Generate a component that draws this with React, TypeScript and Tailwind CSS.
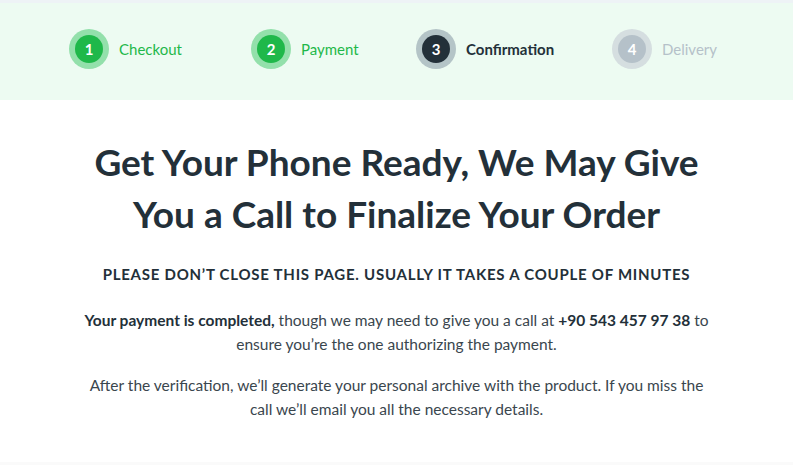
const steps = [
  { n: 1, label: "Checkout", state: "done", w: "w-[182px]" },
  { n: 2, label: "Payment", state: "done", w: "w-[165px]" },
  { n: 3, label: "Confirmation", state: "current", w: "w-[196px]" },
  { n: 4, label: "Delivery", state: "todo", w: "" },
]

function Step({ n, label, state, w }: { n: number; label: string; state: string; w: string }) {
  const ring =
    state === "done" ? "bg-[#93e0ab]" : state === "current" ? "bg-[#b4c4c7]" : "bg-[#d5dee0]"
  const dot =
    state === "done" ? "bg-[#1fb84a]" : state === "current" ? "bg-[#233039]" : "bg-[#b5c1c9]"
  const text =
    state === "done"
      ? "text-[#1fb84a]"
      : state === "current"
        ? "text-[#233039] font-bold"
        : "text-[#b5c1c9]"

  return (
    <div className={`flex items-center gap-[10px] shrink-0 ${w}`}>
      <div className={`w-10 h-10 rounded-full flex items-center justify-center ${ring}`}>
        <div
          className={`w-7 h-7 rounded-full flex items-center justify-center text-white text-[15px] font-bold ${dot}`}
        >
          {n}
        </div>
      </div>
      <span className={`text-[15px] ${text}`}>{label}</span>
    </div>
  )
}

export default function App() {
  return (
    <div className="w-[793px] h-[465px] overflow-hidden bg-white font-['Lato',sans-serif]">
      <div className="h-[3px] bg-[#eef3f6]" />
      <div className="h-[97px] bg-[#edfbf2] flex items-center pl-[69px] pb-[5px]">
        {steps.map((s) => (
          <Step key={s.n} {...s} />
        ))}
      </div>

      <div className="h-[362px] px-10 pt-[36px] text-center">
        <h1 className="text-[37px] leading-[52px] font-bold text-[#233039] max-w-[660px] mx-auto">
          Get Your Phone Ready, We May Give You a Call to Finalize Your Order
        </h1>
        <p className="mt-[23px] text-[15px] font-bold uppercase tracking-[0.05em] text-[#233039]">
          Please don’t close this page. Usually it takes a couple of minutes
        </p>
        <p className="mt-[22px] text-[15.5px] leading-[24px] text-[#3a464e] max-w-[632px] mx-auto">
          <span className="font-bold text-[#233039]">Your payment is completed,</span> though we may
          need to give you a call at <span className="font-bold text-[#233039]">+90 543 457 97 38</span>{" "}
          to ensure you’re the one authorizing the payment.
        </p>
        <p className="mt-[17px] text-[15.5px] leading-[24px] text-[#3a464e] max-w-[632px] mx-auto">
          After the verification, we’ll generate your personal archive with the product. If you miss
          the call we’ll email you all the necessary details.
        </p>
      </div>
      <div className="h-[3px] bg-[#fafafa]" />
    </div>
  )
}
